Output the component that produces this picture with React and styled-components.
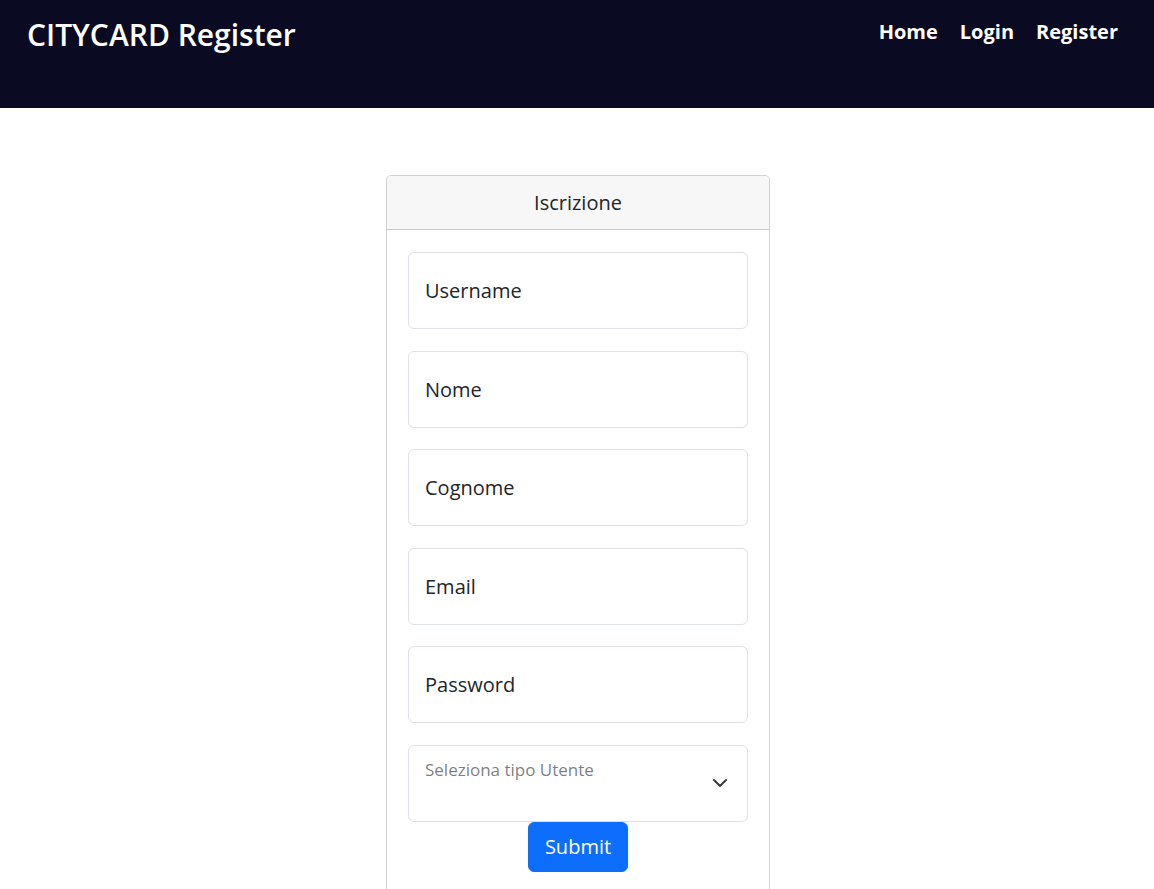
import styled, { createGlobalStyle } from 'styled-components';

const FONT = `"Open Sans", "Noto Sans", "Liberation Sans", sans-serif`;

const Global = createGlobalStyle`
  * { box-sizing: border-box; }
  body {
    margin: 0;
    font-family: ${FONT};
    color: #212529;
    background: #fff;
  }
`;

const FIELDS = ['Username', 'Nome', 'Cognome', 'Email', 'Password'];

const Navbar = styled.header`
  height: 108px;
  background: #0a0a23;
  display: flex;
  justify-content: space-between;
  align-items: flex-start;
  padding: 17px 36px 0 27px;
`;
const Brand = styled.h1`
  margin: 0;
  color: #fff;
  font-size: 30px;
  font-weight: 600;
  line-height: 36px;
`;
const NavLinks = styled.nav`
  display: flex;
  gap: 22px;
`;
const NavLink = styled.a`
  color: #fff;
  font-weight: 700;
  font-size: 20px;
  line-height: 30px;
  text-decoration: none;
`;

const Main = styled.main`
  padding: 67px 0 0 2px;
`;
const Card = styled.section`
  width: 384px;
  margin: 0 auto;
  border: 1px solid rgba(0, 0, 0, 0.175);
  border-radius: 5px;
  overflow: hidden;
`;
const CardHeader = styled.div`
  background: #f7f7f7;
  border-bottom: 1px solid rgba(0, 0, 0, 0.175);
  height: 54px;
  display: flex;
  align-items: center;
  justify-content: center;
  font-size: 20px;
`;
const CardBody = styled.form`
  padding: 22px 21px 21px;
  display: flex;
  flex-direction: column;
  align-items: center;
`;
const Field = styled.div`
  position: relative;
  width: 100%;
  height: 77px;
  margin-bottom: ${({ $last }) => ($last ? '0' : '21.5px')};
`;
const Input = styled.input`
  width: 100%;
  height: 100%;
  border: 1px solid #dee2e6;
  border-radius: 6px;
  padding: 0 16px;
  font-family: ${FONT};
  font-size: 20px;
  color: #212529;
  background: #fff;
  outline: none;
  &::placeholder { color: #212529; opacity: 1; }
`;
const SelectBox = styled.div`
  width: 100%;
  height: 100%;
  border: 1px solid #dee2e6;
  border-radius: 6px;
  padding: 12px 16px;
  font-size: 17px;
  color: rgba(33, 37, 41, 0.6);
  background: #fff;
`;
const Chevron = styled.svg`
  position: absolute;
  right: 20px;
  top: 30px;
  width: 16px;
  height: 16px;
`;
const Submit = styled.button`
  background: #0d6efd;
  color: #fff;
  border: 1px solid #0d6efd;
  border-radius: 6px;
  height: 50px;
  padding: 0 16px;
  font-family: ${FONT};
  font-size: 20px;
  cursor: pointer;
`;

export default function App() {
  return (
    <>
      <Global />
      <Navbar>
        <Brand>CITYCARD Register</Brand>
        <NavLinks>
          <NavLink href="#">Home</NavLink>
          <NavLink href="#">Login</NavLink>
          <NavLink href="#">Register</NavLink>
        </NavLinks>
      </Navbar>
      <Main>
        <Card>
          <CardHeader>Iscrizione</CardHeader>
          <CardBody onSubmit={(e) => e.preventDefault()}>
            {FIELDS.map((f) => (
              <Field key={f}>
                <Input placeholder={f} type={f === 'Password' ? 'password' : 'text'} />
              </Field>
            ))}
            <Field $last>
              <SelectBox>Seleziona tipo Utente</SelectBox>
              <Chevron viewBox="0 0 16 16">
                <path d="m2 5 6 6 6-6" fill="none" stroke="#343a40" strokeWidth="2" strokeLinecap="round" strokeLinejoin="round" />
              </Chevron>
            </Field>
            <Submit type="submit">Submit</Submit>
          </CardBody>
        </Card>
      </Main>
    </>
  );
}
